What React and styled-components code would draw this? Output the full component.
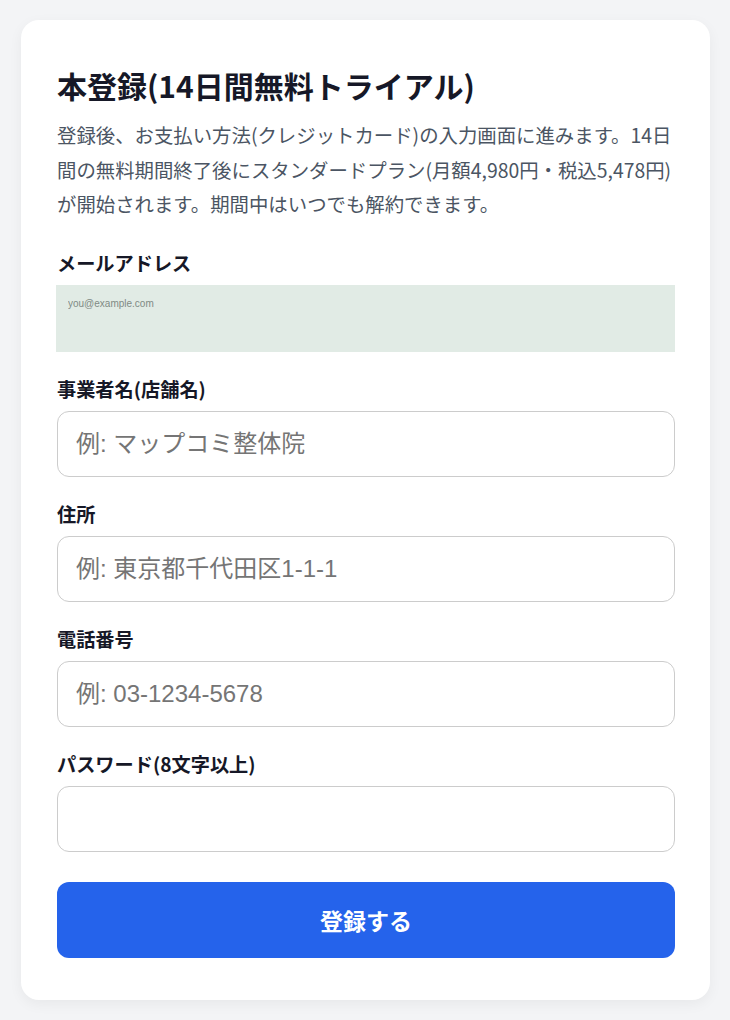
import React from 'react'
import styled, { createGlobalStyle } from 'styled-components'

const GlobalStyle = createGlobalStyle`
  html, body {
    margin: 0;
    padding: 0;
    background: #f3f4f6;
  }
  body {
    font-family: "Noto Sans CJK JP", "Noto Sans", sans-serif;
  }
  * {
    box-sizing: border-box;
  }
`

const Page = styled.div`
  padding: 20px 20px 20px 21px;
`

const Card = styled.div`
  background: #fff;
  border-radius: 18px;
  box-shadow: 0 4px 14px rgba(0, 0, 0, 0.05);
  padding: 44px 35px 42px 36px;
`

const Title = styled.h1`
  margin: 0 0 12px;
  font-size: 30px;
  line-height: 42px;
  font-weight: 700;
  color: #161827;
`

const Lead = styled.p`
  margin: 0 0 28px;
  font-size: 19.4px;
  line-height: 34.5px;
  color: #4b5563;
`

const Form = styled.form`
  display: flex;
  flex-direction: column;
  gap: 24px;
`

const Field = styled.div`
  display: flex;
  flex-direction: column;
`

const Label = styled.label`
  font-size: 19.2px;
  line-height: 27px;
  font-weight: 700;
  color: #161827;
  margin-bottom: 8px;
`

const Input = styled.input`
  width: 100%;
  height: 66px;
  padding: 0 18px;
  border: 1px solid #cccccc;
  border-radius: 12px;
  background: #fff;
  font-family: "Liberation Sans", "Noto Sans CJK JP", sans-serif;
  font-size: 24px;
  color: #222;
  outline: none;

  &::placeholder {
    color: #757575;
  }
`

const EmailInput = styled.input`
  width: calc(100% + 1px);
  height: 67px;
  margin-left: -1px;
  padding: 12px 11px 42px 12px;
  border: none;
  border-radius: 0;
  background: #e1ebe5;
  font-family: "Liberation Sans", sans-serif;
  font-size: 10px;
  color: #222;
  outline: none;

  &::placeholder {
    color: #7f8a84;
  }
`

const SubmitButton = styled.button`
  margin-top: 6px;
  height: 76px;
  border: none;
  border-radius: 12px;
  background: #2563eb;
  color: #fff;
  font-family: "Noto Sans CJK JP", sans-serif;
  font-size: 23px;
  font-weight: 700;
  cursor: pointer;
`

const fields = [
  { id: 'shop', label: '事業者名(店舗名)', placeholder: '例: マップコミ整体院', type: 'text' },
  { id: 'address', label: '住所', placeholder: '例: 東京都千代田区1-1-1', type: 'text' },
  { id: 'phone', label: '電話番号', placeholder: '例: 03-1234-5678', type: 'tel' },
  { id: 'password', label: 'パスワード(8文字以上)', placeholder: '', type: 'password' },
]

const App = () => {
  return (
    <Page>
      <GlobalStyle />
      <Card>
        <Title>本登録(14日間無料トライアル)</Title>
        <Lead>
          登録後、お支払い方法(クレジットカード)の入力画面に進みます。14日間の無料期間終了後にスタンダードプラン(月額4,980円・税込5,478円)が開始されます。期間中はいつでも解約できます。
        </Lead>
        <Form onSubmit={(e) => e.preventDefault()}>
          <Field>
            <Label htmlFor="email">メールアドレス</Label>
            <EmailInput id="email" type="email" placeholder="you@example.com" />
          </Field>
          {fields.map((f) => (
            <Field key={f.id}>
              <Label htmlFor={f.id}>{f.label}</Label>
              <Input id={f.id} type={f.type} placeholder={f.placeholder} />
            </Field>
          ))}
          <SubmitButton type="submit">登録する</SubmitButton>
        </Form>
      </Card>
    </Page>
  )
}

export default App
